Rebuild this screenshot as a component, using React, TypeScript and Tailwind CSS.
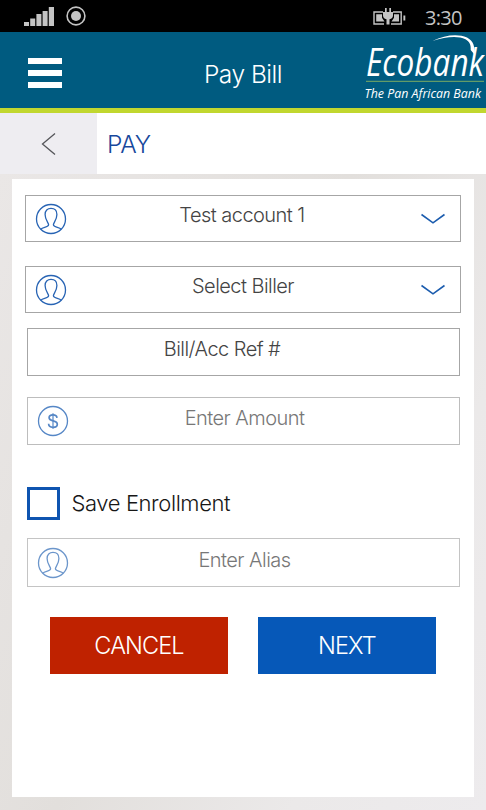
import type { ReactNode } from "react";

function PersonIcon({ className }: { className: string }) {
  return (
    <svg className={className} width="32" height="32" viewBox="0 0 32 32" fill="none" stroke="currentColor" strokeWidth="1.3">
      <circle cx="16" cy="16" r="14.500" />
      <path d="M5.800 26.200C8 24.200 13.600 24.400 13.600 21.800c0-2-3.500-4.600-3.500-10.400C10.100 7.600 12.400 5.400 16 5.400s5.900 2.200 5.900 6c0 5.800-3.500 8.400-3.500 10.400 0 2.600 5.600 2.400 7.800 4.400" />
    </svg>
  );
}

function DollarIcon({ className }: { className: string }) {
  return (
    <svg className={className} width="32" height="32" viewBox="0 0 32 32" fill="none" stroke="currentColor" strokeWidth="1.3">
      <circle cx="16" cy="16" r="14.500" />
      <path d="M16 8.300v15.400" strokeWidth="1.200" />
      <path d="M20 12.900c-.2-2-1.700-3-4-3-2.400 0-3.900 1.100-3.900 2.900 0 4.300 8.200 1.900 8.200 6.400 0 1.900-1.700 3.100-4.300 3.100-2.700 0-4.300-1.200-4.400-3.500" strokeWidth="1.700" />
    </svg>
  );
}

function ChevronDown() {
  return (
    <svg className="text-[#1b5cae]" width="26" height="12" viewBox="0 0 26 12" fill="none" stroke="currentColor" strokeWidth="1.600">
      <path d="M1.500 1.500 13 9.800 24.500 1.500" />
    </svg>
  );
}

function StatusBar() {
  return (
    <div className="flex h-8 items-center bg-black pr-[24px] pl-[24px] text-[#c4c4c4]">
      <svg width="30" height="20" viewBox="0 0 30 20" fill="currentColor">
        <path d="M0 16h5v4H0zM6.200 12.500h5V20h-5zM12.400 8h5v12h-5zM18.600 5h5v15h-5zM24.800 1H30v19h-5.200z" />
      </svg>
      <svg className="ml-[11.500px]" width="20" height="20" viewBox="0 0 20 20">
        <circle cx="10" cy="10" r="8.900" fill="none" stroke="currentColor" strokeWidth="1.600" />
        <circle cx="10" cy="10" r="5" fill="currentColor" />
      </svg>
      <svg className="ml-auto" width="33" height="19" viewBox="0 0 33 19">
        <path d="M10 5H1v12h10M20 5h8.200v12H18" fill="none" stroke="currentColor" strokeWidth="1.400" />
        <path d="M3.200 7.200H9v3.600l2.500 3.800H3.200zM21 7.200h5v7.400h-7.500l2.500-3.800zM30.400 8.500h1.900v5h-1.900z" fill="currentColor" />
        <path d="M12 1h1.700v4h2.600V1H18v4h2v3.500c0 2-1.200 3.300-3.500 3.800v5.200h-3v-5.200c-2.300-.5-3.500-1.800-3.500-3.800V5h2z" fill="currentColor" />
      </svg>
      <span className="ml-[19px] w-[37px] pt-[3px] font-['Open_Sans'] text-[20px] leading-6 font-normal tracking-[-0.700px]">3:30</span>
    </div>
  );
}

function Logo() {
  return (
    <svg className="overflow-visible text-white" width="126" height="76" viewBox="0 0 126 76" fill="currentColor">
      <text x="6" y="44" fontFamily="Open Sans, Noto Sans, sans-serif" fontSize="38" fontStyle="italic" fontWeight="400" textLength="118" lengthAdjust="spacingAndGlyphs">Ecobank</text>
      <path d="M72.500 9C85 2.800 98 1.500 107 5.500c6.500 3.500 8.200 9 7 16.500l-3.300-4C111 12.500 109.500 9.500 105.500 7.200 98 3.500 86 4.500 72.500 9Z" />
      <path d="M6 49.300h118" stroke="#7cac62" strokeWidth="1" />
      <text x="4.500" y="66" fontFamily="Open Sans, Noto Sans, sans-serif" fontSize="13.500" fontStyle="italic" textLength="116.500" lengthAdjust="spacingAndGlyphs">The Pan African Bank</text>
    </svg>
  );
}

function Header() {
  return (
    <header className="grid h-[81px] grid-cols-[126px_1fr_126px] items-center border-b-[5px] border-[#c1d72f] bg-[#005b80]">
      <button className="mt-[5px] ml-[28px] flex w-[34px] flex-col gap-[6px]" aria-label="Menu">
        <span className="h-[6px] w-full bg-white" />
        <span className="h-[6px] w-full bg-white" />
        <span className="h-[6px] w-full bg-white" />
      </button>
      <h1 className="pt-[7px] text-center text-[24.500px] leading-8 font-light tracking-[-0.500px] text-white">Pay Bill</h1>
      <Logo />
    </header>
  );
}

function Field({ className, label = "", icon, trailing, children }: { className: string; label?: string; icon?: ReactNode; trailing?: ReactNode; children: ReactNode }) {
  return (
    <div className={`grid grid-cols-[60px_1fr_60px] items-center border ${className}`}>
      <div className="pl-[8.500px]">{icon}</div>
      <span className={`self-start pt-[7px] text-center text-[20px] leading-6 font-light tracking-[-0.540px] whitespace-nowrap ${label}`}>{children}</span>
      <div className="pl-[20px]">{trailing}</div>
    </div>
  );
}

export default function App() {
  return (
    <div className="flex h-[810px] w-[486px] flex-col overflow-hidden bg-[#e8e5e4] font-['Inter','Liberation_Sans',sans-serif]">
      <StatusBar />
      <Header />
      <div className="flex h-[61px] shrink-0 bg-white">
        <button className="flex w-[97px] items-center justify-center bg-[#eeedf1]" aria-label="Back">
          <svg width="15" height="24" viewBox="0 0 15 24" fill="none" stroke="#55565a" strokeWidth="1.300">
            <path d="M14 1.500 1.500 12 14 22.500" />
          </svg>
        </button>
        <h2 className="pt-[15px] pl-[10px] text-[24.500px] leading-8 font-light tracking-[-0.300px] text-[#17489c]">PAY</h2>
      </div>
      <div className="flex flex-1 bg-[linear-gradient(115deg,#eae7e6_0%,#e2dfdc_45%,#ebe9e9_75%,#edebed_100%)] px-3 pt-[5px] pb-[13px]">
        <main className="flex w-[462px] flex-col bg-white pt-[16px]">
          <Field className="ml-[13px] h-[47px] w-[436px] border-[#a6a6a6] text-[#444444]" label="pr-[2px]" icon={<PersonIcon className="text-[#2864b4]" />} trailing={<ChevronDown />}>
            Test account 1
          </Field>
          <Field className="mt-[24px] ml-[13px] h-[47px] w-[436px] border-[#a6a6a6] text-[#444444]" icon={<PersonIcon className="text-[#2864b4]" />} trailing={<ChevronDown />}>
            Select Biller
          </Field>
          <Field className="mt-[15px] ml-[15px] h-[48px] w-[433px] border-[#a6a6a6] text-[#444444]" label="mt-px pr-[43px]">
            Bill/Acc Ref #
          </Field>
          <Field className="mt-[21px] ml-[15px] h-[48px] w-[433px] border-[#bdbdbd] text-[#777777]" label="mt-px pl-[2px]" icon={<DollarIcon className="text-[#5687c6]" />}>
            Enter Amount
          </Field>
          <label className="mt-[42px] ml-[15px] flex h-[33px] items-center">
            <span className="size-[33px] border-[3px] border-[#0e54b0]" />
            <span className="pb-[2px] pl-[11.500px] text-[22px] leading-8 font-light tracking-[-0.400px] text-[#171717]">Save Enrollment</span>
          </label>
          <Field className="mt-[18px] ml-[15px] h-[49px] w-[433px] border-[#c4c4c4] text-[#777777]" label="mt-[2px] pl-[2px]" icon={<PersonIcon className="text-[#6c96cb]" />}>
            Enter Alias
          </Field>
          <div className="mt-[30px] ml-[38px] flex gap-[30px] text-[23.500px] leading-8 font-light tracking-[-0.900px] text-white">
            <button className="h-[57px] w-[178px] bg-[#bf2200]">CANCEL</button>
            <button className="h-[57px] w-[178px] bg-[#0658b8]">NEXT</button>
          </div>
        </main>
      </div>
    </div>
  );
}
